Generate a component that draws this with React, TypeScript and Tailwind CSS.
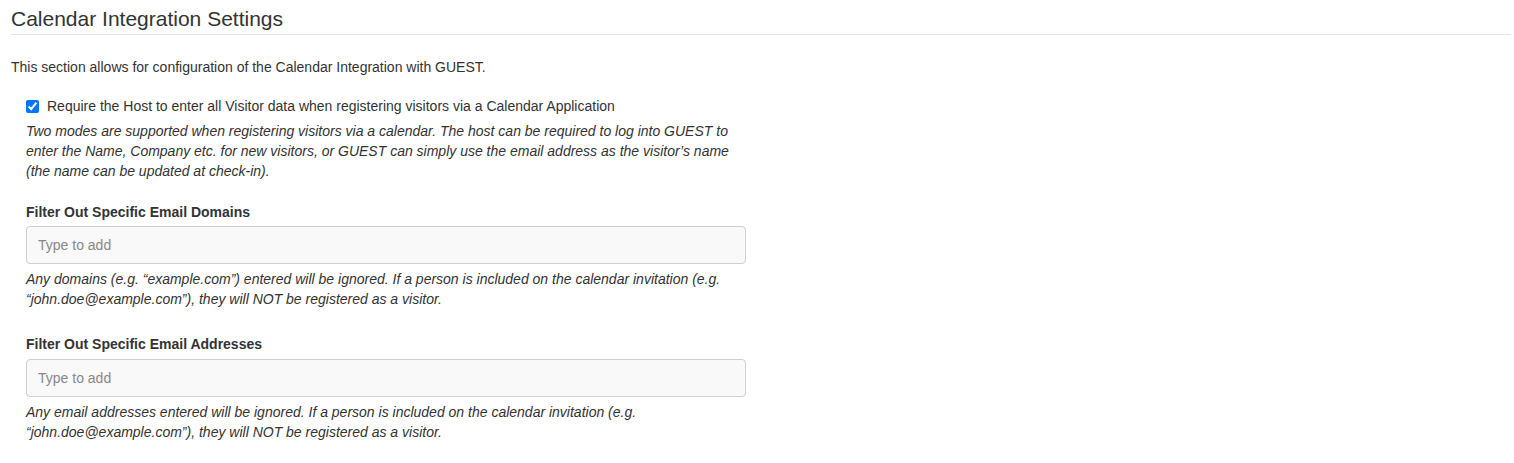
export default function App() {
    return (
        <div className="min-h-screen bg-white pl-[11px] pr-[3px] pt-[4px] font-['Liberation_Sans',Arial,sans-serif] text-[14px] leading-[20px] text-[#333]">
            <h2 className="mb-[22px] border-b border-[#e5e5e5] text-[21px] leading-[30px] font-normal">
                Calendar Integration Settings
            </h2>

            <p>
                This section allows for configuration of the Calendar
                Integration with GUEST.
            </p>

            <div className="ml-[15px] w-[720px]">
                <label className="mt-[19px] flex items-center gap-[8px]">
                    <input
                        type="checkbox"
                        checked
                        readOnly
                        className="h-[13px] w-[13px] accent-[#0075ff]"
                    />
                    <span>
                        Require the Host to enter all Visitor data when
                        registering visitors via a Calendar Application
                    </span>
                </label>
                <p className="mt-[5px] italic">
                    Two modes are supported when registering visitors via a
                    calendar. The host can be required to log into GUEST to
                    enter the Name, Company etc. for new visitors, or GUEST
                    can simply use the email address as the visitor’s name
                    (the name can be updated at check-in).
                </p>

                <section className="mt-[21px]">
                    <label className="block font-bold">
                        Filter Out Specific Email Domains
                    </label>
                    <input
                        readOnly
                        placeholder="Type to add"
                        className="mt-[4px] block h-[38px] w-full rounded-[4px] border border-[#cfcfcf] bg-[#f9f9f9] px-[11px] text-[14px] placeholder:text-[#888] outline-none"
                    />
                    <p className="mt-[5px] italic">
                        Any domains (e.g. “example.com”) entered will be
                        ignored. If a person is included on the calendar
                        invitation (e.g. “john.doe@example.com”), they will
                        NOT be registered as a visitor.
                    </p>
                </section>

                <section className="mt-[25px]">
                    <label className="block font-bold">
                        Filter Out Specific Email Addresses
                    </label>
                    <input
                        readOnly
                        placeholder="Type to add"
                        className="mt-[5px] block h-[38px] w-full rounded-[4px] border border-[#cfcfcf] bg-[#f9f9f9] px-[11px] text-[14px] placeholder:text-[#888] outline-none"
                    />
                    <p className="mt-[5px] italic">
                        Any email addresses entered will be ignored. If a
                        person is included on the calendar invitation (e.g.
                        “john.doe@example.com”), they will NOT be registered
                        as a visitor.
                    </p>
                </section>
            </div>
        </div>
    );
}
